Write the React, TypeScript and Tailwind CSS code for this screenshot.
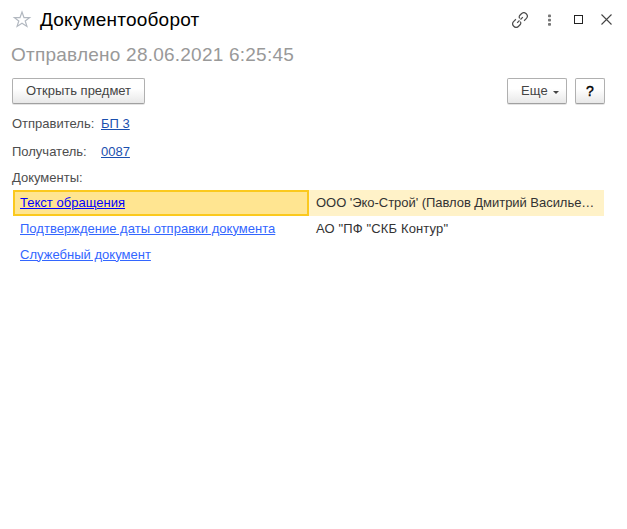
import type { ReactNode } from "react";

function StarIcon() {
  return (
    <svg className="-mt-0.5 h-5 w-5 shrink-0" viewBox="0 0 20 20" fill="none" stroke="#b2b8c0" strokeWidth="1.2">
      <path d="M10 3 L12 8.6 H17.6 L13.2 12 L14.9 17.4 L10 14.2 L5.1 17.4 L6.8 12 L2.4 8.6 H8 Z" />
    </svg>
  );
}

function LinkIcon() {
  return (
    <svg className="h-4 w-4" viewBox="0 0 16 16" fill="none" stroke="#4d4d4d" strokeWidth="1.2">
      <g transform="rotate(-45 8 8)">
        <path d="M9 6.6 A2.4 2.4 0 0 1 11 4.6 H13.4 A3.4 3.4 0 0 1 13.4 11.4 H10.4" />
        <path d="M7 9.4 A2.4 2.4 0 0 1 5 11.4 H2.6 A3.4 3.4 0 0 1 2.6 4.6 H5.6" />
        <path d="M4 8 H7.3 M8.7 8 H12" />
      </g>
    </svg>
  );
}

function Button({ className, children }: { className: string; children: ReactNode }) {
  return (
    <button
      className={`flex h-[26px] items-center rounded-[2px] border border-[#b0b0b0] border-b-[#a0a0a0] bg-linear-to-b from-white from-40% to-[#e8e8e8] pb-0.5 text-[#444] shadow-[0_1px_0_#e4e4e4] ${className}`}
    >
      {children}
    </button>
  );
}

function Field({ label, value }: { label: string; value: string }) {
  return (
    <div className="flex h-7 items-center">
      <span className="w-[89px] text-[#4d4d4d]">{label}</span>
      <a className="text-[#1a4fae] underline">{value}</a>
    </div>
  );
}

const rows = [
  { name: "Текст обращения", org: "ООО 'Эко-Строй' (Павлов Дмитрий Василье…" },
  { name: "Подтверждение даты отправки документа", org: 'АО "ПФ "СКБ Контур"' },
  { name: "Служебный документ", org: "" },
];

export default function App() {
  return (
    <main className="h-[529px] w-[627px] overflow-hidden bg-white pl-3 font-['Liberation_Sans',Arial,sans-serif] text-[13px] leading-[15px]">
      <header className="flex h-10 items-center justify-between pr-[15px]">
        <div className="flex items-center gap-2">
          <StarIcon />
          <h1 className="text-[19px] leading-6 tracking-[0.23px] text-black">Документооборот</h1>
        </div>
        <div className="-mt-px flex items-center">
          <LinkIcon />
          <svg className="ml-5 h-3 w-[3px]" viewBox="0 0 3 12" fill="#777">
            <rect y="0.5" width="3" height="2.8" rx="0.8" />
            <rect y="4.7" width="3" height="2.8" rx="0.8" />
            <rect y="8.9" width="3" height="2.8" rx="0.8" />
          </svg>
          <span className="ml-[23px] h-[9px] w-[9px] border border-[#222]" />
          <svg className="ml-[18px] h-[11px] w-[11px]" viewBox="0 0 11 11" stroke="#444" strokeWidth="1.1">
            <path d="M0.5 0.5 L10.5 10.5 M10.5 0.5 L0.5 10.5" />
          </svg>
        </div>
      </header>
      <h2 className="-ml-px h-[38px] pt-[3px] text-[19px] leading-6 tracking-[0.23px] text-[#999]">
        Отправлено 28.06.2021 6:25:45
      </h2>
      <div className="flex justify-between pr-[22px]">
        <Button className="w-[133px] justify-center">Открыть предмет</Button>
        <div className="flex gap-2">
          <Button className="w-[60px] pl-[13px]">
            <span className="tracking-[0.2px]">Еще</span>
            <svg className="mt-1 ml-[5px] h-[3px] w-[6px]" viewBox="0 0 6 3" fill="#444">
              <path d="M0 0 H6 L3 3 Z" />
            </svg>
          </Button>
          <Button className="w-[30px] justify-center pt-px !pb-0 text-[14px] !text-black [-webkit-text-stroke:0.4px_black]">?</Button>
        </div>
      </div>
      <section className="pt-[5px]">
        <Field label="Отправитель:" value="БП 3" />
        <Field label="Получатель:" value="0087" />
        <div className="h-[25px] pt-[5px] text-[#4d4d4d]">Документы:</div>
      </section>
      <div className="ml-px w-[591px]">
        {rows.map((row, i) => (
          <div key={row.name} className={`flex h-[26px] ${i === 0 ? "bg-[#fff2c8]" : ""}`}>
            <div
              className={`flex w-[296px] shrink-0 items-center border-2 pb-0.5 pl-[5px] ${
                i === 0 ? "border-[#fbc91e] bg-[#ffe591] text-[#0000ff]" : "border-transparent text-[#3366ff]"
              }`}
            >
              <a className="tracking-[0.02px] underline">{row.name}</a>
            </div>
            <div className={`flex flex-1 items-center pb-0.5 pl-[7px] text-[#333] ${i === 0 ? "tracking-[-0.04px]" : "tracking-[0.14px]"}`}>
              <span className="whitespace-nowrap">{row.org}</span>
            </div>
          </div>
        ))}
      </div>
    </main>
  );
}
